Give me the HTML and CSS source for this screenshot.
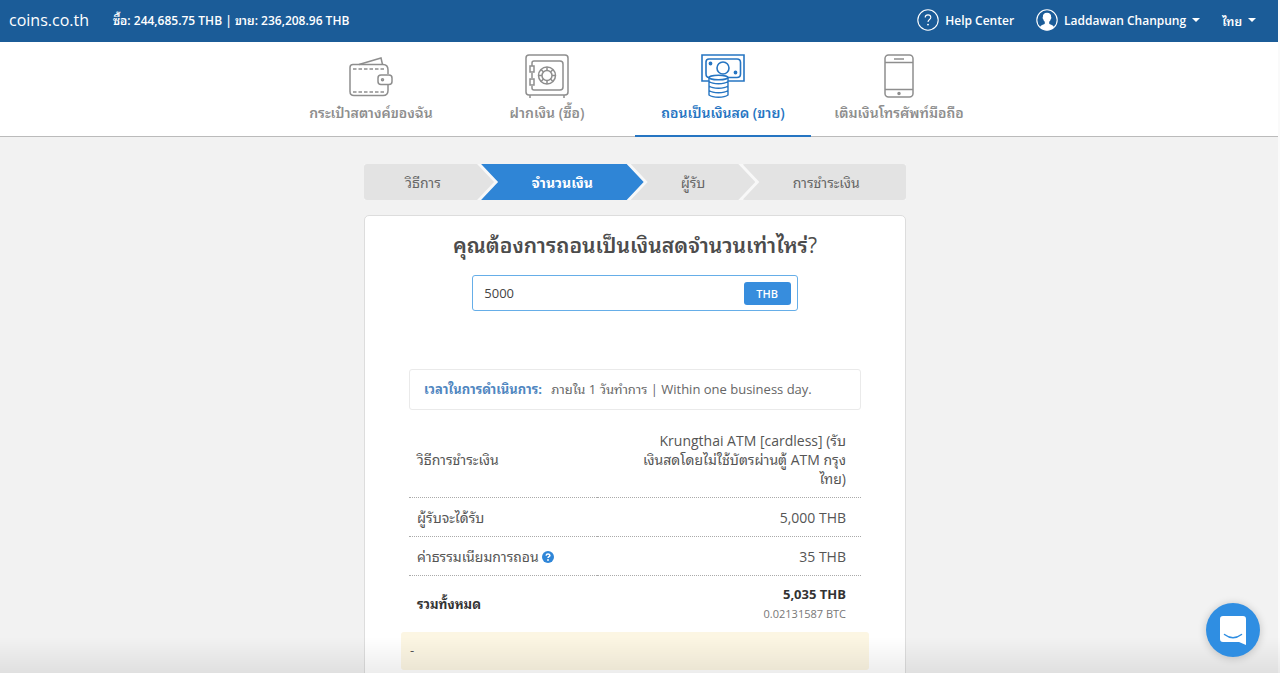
FILE: index.html
```html
<!DOCTYPE html>
<html lang="th">
<head>
    <meta charset="UTF-8">
    <meta name="viewport" content="width=device-width, initial-scale=1.0">
    <title>coins.co.th</title>
    <link rel="stylesheet" href="styles.css">
</head>
<body>
    <!-- Top bar -->
    <header class="topbar">
        <a class="brand" href="#">coins.co.th</a>
        <span class="rates">ซื้อ: 244,685.75 THB | ขาย: 236,208.96 THB</span>
        <div class="topbar-right">
            <a class="top-link help" href="#">
                <svg width="22" height="22" viewBox="0 0 22 22" fill="none" stroke="#fff" stroke-width="1.1">
                    <circle cx="11" cy="11" r="10.2"/>
                    <path d="M8.2 8.6c0-1.7 1.2-2.7 2.8-2.7s2.8 1 2.8 2.5c0 2-2.8 2.2-2.8 4.6"/>
                    <circle cx="11" cy="15.6" r=".4" fill="#fff"/>
                </svg>
                Help Center
            </a>
            <button class="top-link user" type="button">
                <svg width="22" height="22" viewBox="0 0 22 22">
                    <circle cx="11" cy="11" r="10.2" fill="none" stroke="#fff" stroke-width="1.1"/>
                    <path fill="#fff" d="M11 3.8c-2.900 0-4.300 1.800-4.100 4.200-.5.3-.3 1.800.4 2.200.2 1.300.8 2 1.500 2.600v1.800c-.5 1.100-3.600 1.300-4.800 3.300 1.600 2.100 4.200 3.300 7 3.300s5.400-1.200 7-3.300c-1.200-2-4.300-2.200-4.800-3.300v-1.800c.7-.6 1.300-1.300 1.500-2.600.7-.4.9-1.900.4-2.200.2-2.400-1.200-4.200-4.100-4.200z"/>
                </svg>
                Laddawan Chanpung
                <span class="caret"></span>
            </button>
            <button class="top-link" type="button">ไทย <span class="caret"></span></button>
        </div>
    </header>

    <!-- Main navigation -->
    <nav class="tabs">
        <a class="tab" href="#">
            <svg width="44" height="44" viewBox="0 0 44 44" fill="none" stroke="currentColor" stroke-width="1.5">
                <path d="M39 20v-4q0-5.500-5-5.500H4q-3 0-3 3v24q0 4 4 4h29q5 0 5-5V31"/>
                <path d="M10 10.500L32 4l1.500 6.500"/>
                <path d="M32 21h8q3 0 3 3v3.500q0 3-3 3h-8q-3 0-3-3V24q0-3 3-3z"/>
                <circle cx="33.500" cy="25.700" r="1"/>
                <path stroke-dasharray="3.500 2" d="M4 15h31M4 38h31"/>
            </svg>
            กระเป๋าสตางค์ของฉัน
        </a>
        <a class="tab" href="#">
            <svg width="44" height="44" viewBox="0 0 44 44" fill="none" stroke="currentColor" stroke-width="1.5">
                <rect x="1" y="1" width="42" height="40" rx="3"/>
                <path d="M7 12V9q0-2 2-2h26q3 0 3 3v23q0 3-3 3H9q-2 0-2-2v-2M7 19v5M5 41v3M39 41v3"/>
                <rect x="5" y="12" width="4" height="6"/>
                <rect x="5" y="25" width="4" height="6"/>
                <circle cx="22" cy="21.500" r="8.500"/>
                <circle cx="22" cy="21.500" r="5"/>
                <path d="M22 13v3.500M22 26.500V30M13.500 21.500H17M27 21.500h3.500M16 15.500l2.500 2.500M25.500 25l2.500 2.500M28 15.500L25.500 18M18.500 25L16 27.500"/>
            </svg>
            ฝากเงิน (ซื้อ)
        </a>
        <a class="tab active" href="#">
            <svg width="44" height="44" viewBox="0 0 44 44" fill="none" stroke="currentColor" stroke-width="1.6">
                <path d="M8 27H1V1h42v26H27"/>
                <path d="M8 23.500q-3 0-3-4V8q0-3 3-3h28q3.500 0 3.500 3.500V20q0 3.500-3.500 3.500h-9"/>
                <circle cx="22" cy="14" r="6"/>
                <circle cx="9.500" cy="9.500" r="1.100" fill="currentColor"/>
                <circle cx="34.500" cy="18.500" r="1.100" fill="currentColor"/>
                <ellipse cx="17.500" cy="23.500" rx="9.500" ry="2.300" fill="#fff"/>
                <path stroke-width="1.400" d="M8 23.500V41q3 2.200 9.500 2.200T27 41V23.500M8 27.500q3 2.300 9.500 2.300t9.500-2.300M8 32q3 2.300 9.500 2.300T27 32M8 36.500q3 2.300 9.500 2.300t9.500-2.300"/>
            </svg>
            ถอนเป็นเงินสด (ขาย)
        </a>
        <a class="tab" href="#">
            <svg width="44" height="44" viewBox="0 0 44 44" fill="none" stroke="currentColor" stroke-width="1.5">
                <rect x="8" y="1" width="28" height="42" rx="3.500"/>
                <path d="M8 8.500h28M8 35.500h28M17 5h10"/>
                <circle cx="22" cy="39.500" r="1" fill="currentColor"/>
            </svg>
            เติมเงินโทรศัพท์มือถือ
        </a>
    </nav>

    <main class="content">
        <!-- Progress steps -->
        <ol class="steps">
            <li class="step step-first">วิธีการ</li>
            <li class="step step-current">จำนวนเงิน</li>
            <li class="step step-third">ผู้รับ</li>
            <li class="step step-last">การชำระเงิน</li>
        </ol>

        <section class="card">
            <h1><label for="amount">คุณต้องการถอนเป็นเงินสดจำนวนเท่าไหร่<span class="mark">?</span></label></h1>
            <div class="amount-box">
                <input id="amount" class="amount" type="text" value="5000">
                <button class="currency" type="button">THB</button>
            </div>

            <p class="notice"><strong>เวลาในการดำเนินการ:</strong> ภายใน 1 วันทำการ | Within one business day.</p>

            <table class="summary">
                <tr>
                    <th scope="row">วิธีการชำระเงิน</th>
                    <td>Krungthai ATM [cardless] (รับ<br>เงินสดโดยไม่ใช้บัตรผ่านตู้ ATM กรุง<br>ไทย)</td>
                </tr>
                <tr>
                    <th scope="row">ผู้รับจะได้รับ</th>
                    <td>5,000 THB</td>
                </tr>
                <tr>
                    <th scope="row">ค่าธรรมเนียมการถอน
                        <svg class="info" width="12" height="12" viewBox="0 0 12 12">
                            <circle cx="6" cy="6" r="6" fill="#2f86d8"/>
                            <path d="M4.100 4.600q.2-1.700 1.900-1.700t1.900 1.500c0 1.200-1.900 1.200-1.900 2.600" fill="none" stroke="#fff" stroke-width="1.500"/>
                            <circle cx="6" cy="9" r=".9" fill="#fff"/>
                        </svg>
                    </th>
                    <td>35 THB</td>
                </tr>
                <tr class="total">
                    <th scope="row">รวมทั้งหมด</th>
                    <td>5,035 THB<small>0.02131587 BTC</small></td>
                </tr>
            </table>

            <div class="warning">-</div>
        </section>
    </main>

    <button class="chat" type="button" aria-label="Chat">
        <svg width="26" height="30" viewBox="0 0 26 30">
            <path fill="#fff" d="M3 1h20q3 0 3 3v26l-7-3H3q-3 0-3-3V4q0-3 3-3z"/>
            <path fill="none" stroke="#2f8ee2" stroke-width="1.500" stroke-linecap="round" d="M4.500 19.500q8.500 6.500 17 0"/>
        </svg>
    </button>
</body>
</html>
```
FILE: styles.css
```css
* {
    box-sizing: border-box;
}

body {
    margin: 0;
    min-height: 100vh;
    background-color: #f2f2f2;
    border-right: 2px solid #fafafa;
    color: #555;
    font-family: "Open Sans", "Noto Sans Thai Looped", "Waree", "Noto Sans", sans-serif;
    font-size: 13px;
    line-height: 19px;
    overflow: hidden;
}

a {
    color: inherit;
    text-decoration: none;
}

button {
    border: none;
    background: none;
    font-family: inherit;
    cursor: pointer;
}

/* Top bar */
.topbar {
    display: flex;
    align-items: center;
    height: 42px;
    padding: 0 22px 2px 9px;
    background-color: #1b5c98;
    color: #fff;
    font-weight: 600;
}

.brand {
    font-size: 16px;
    font-weight: 400;
    margin-right: 24px;
}

.rates {
    font-size: 12px;
}

.topbar-right {
    display: flex;
    align-items: center;
    gap: 22px;
    margin-left: auto;
}

.top-link {
    display: flex;
    align-items: center;
    gap: 6px;
    padding: 0;
    color: #fff;
    font-size: 12px;
    font-weight: 600;
}

.caret {
    border: 4px solid transparent;
    border-top-color: #fff;
    border-bottom: 0;
}

/* Navigation */
.tabs {
    display: flex;
    justify-content: center;
    padding-right: 8px;
    background-color: #fff;
    border-bottom: 1px solid #bbb;
}

.tab {
    display: flex;
    flex-direction: column;
    align-items: center;
    gap: 5px;
    width: 176px;
    height: 95px;
    padding-top: 12px;
    margin-bottom: -1px;
    color: #8e8e8e;
    font-size: 14px;
    font-weight: 600;
    white-space: nowrap;
}

.tab.active {
    color: #2675c2;
    border-bottom: 2px solid #2675c2;
}

.content {
    max-width: 550px;
    margin: 0 auto;
    padding: 27px 8px 0 0;
}

/* Steps */
.steps {
    display: flex;
    margin: 0 0 15px;
    padding: 0;
    list-style: none;
    background-color: #f8f8f8;
    text-align: center;
    font-size: 14px;
    line-height: 37px;
    color: #666;
}

.step {
    flex: none;
    height: 36px;
    background-color: #e3e3e3;
    margin-left: -13px;
    clip-path: polygon(0 0, calc(100% - 17px) 0, 100% 50%, calc(100% - 17px) 100%, 0 100%, 17px 50%);
}

.step-first {
    width: 24%;
    margin-left: 0;
    padding-right: 12px;
    border-radius: 3px;
    clip-path: polygon(0 0, calc(100% - 17px) 0, 100% 50%, calc(100% - 17px) 100%, 0 100%);
}

.step-current {
    width: 30%;
    background-color: #2f85d6;
    color: #fff;
    font-weight: 700;
}

.step-third {
    width: 23%;
}

.step-last {
    flex: 1;
    padding-left: 4px;
    border-radius: 3px;
    clip-path: polygon(0 0, 100% 0, 100% 100%, 0 100%, 17px 50%);
}

/* Card */
.card {
    padding: 15px 44px 30px;
    background-color: #fff;
    border: 1px solid #ddd;
    border-radius: 5px;
}

h1 {
    margin: 0 0 16px;
    color: #4c4c4c;
    text-align: center;
    font-size: 21px;
    font-weight: 600;
    line-height: 28px;
    white-space: nowrap;
}

.mark {
    font-weight: 400;
}

.amount-box {
    display: flex;
    align-items: center;
    width: 72%;
    height: 36px;
    margin: 0 auto 58px;
    padding-right: 6px;
    border: 1px solid #66aee8;
    border-radius: 3px;
}

.amount {
    flex: 1;
    min-width: 0;
    padding: 0 11px;
    border: none;
    outline: none;
    background: none;
    color: #444;
    font-family: inherit;
    font-size: 13px;
}

.currency {
    width: 47px;
    height: 23px;
    padding: 0;
    border-radius: 3px;
    background-color: #378ddd;
    color: #fff;
    font-size: 11px;
    font-weight: 600;
}

.notice {
    margin: 0 0 11px;
    padding: 10px 14px;
    border: 1px solid #eaeaea;
    border-radius: 3px;
    color: #666;
    white-space: nowrap;
}

.notice strong {
    margin-right: 6px;
    color: #4f86c0;
}

.summary {
    width: 100%;
    border-collapse: collapse;
    font-size: 14px;
}

.summary tr {
    border-bottom: 1px dotted #aaa;
}

.summary th,
.summary td {
    padding: 10px 15px 9px 8px;
    font-weight: 400;
    white-space: nowrap;
}

.summary th {
    text-align: left;
}

.summary td {
    text-align: right;
}

.info {
    vertical-align: -1px;
}

.summary .total {
    border-bottom: none;
    color: #333;
}

.summary .total th,
.summary .total td {
    padding-top: 9px;
    font-size: 13px;
    font-weight: 700;
}

.summary small {
    display: block;
    color: #777;
    font-size: 11px;
    font-weight: 400;
}

.warning {
    height: 38px;
    margin: 0 -8px;
    padding: 9px;
    border-radius: 3px;
    background-color: #fcf6e3;
}

/* Shade along the bottom of the window */
body::after {
    content: '';
    position: fixed;
    left: 0;
    right: 0;
    bottom: 0;
    height: 36px;
    background: linear-gradient(rgba(0, 0, 0, 0), rgba(0, 0, 0, 0.07));
    pointer-events: none;
}

.chat {
    position: fixed;
    right: 20px;
    bottom: 16px;
    z-index: 1;
    display: flex;
    align-items: center;
    justify-content: center;
    width: 54px;
    height: 54px;
    border-radius: 50%;
    background-color: #2f8ee2;
    box-shadow: 0 1px 8px rgba(0, 0, 0, 0.2);
}
```
